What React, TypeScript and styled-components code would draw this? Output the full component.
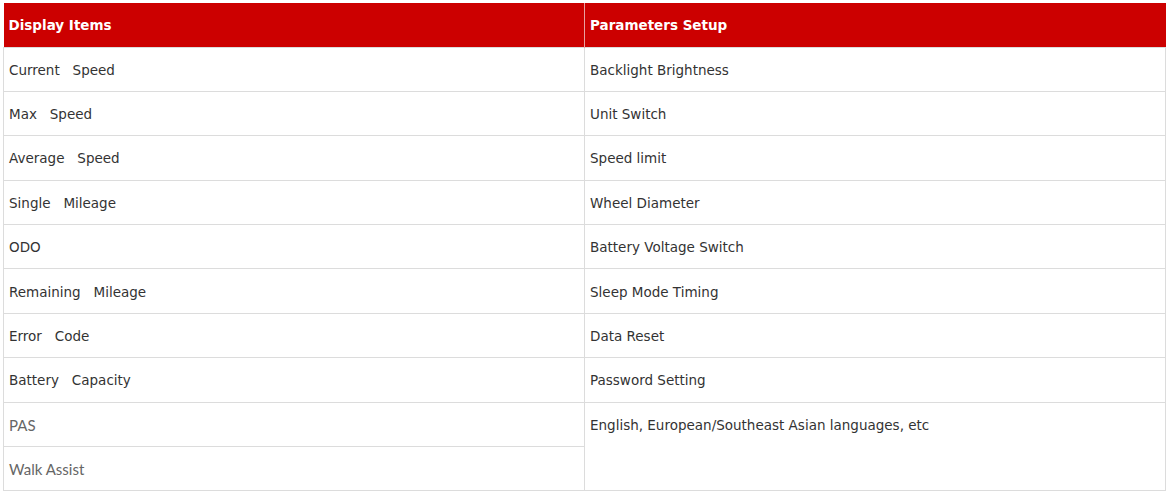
import React from "react";
import styled, { createGlobalStyle } from "styled-components";

const Global = createGlobalStyle`
  html, body { margin: 0; padding: 0; background: #fff; }
  body { padding: 3px; }
`;

const Table = styled.table`
  width: 1163px;
  border-collapse: collapse;
  table-layout: fixed;
  font-family: "DejaVu Sans", Verdana, sans-serif;
  font-size: 13.5px;
  color: #333;
`;

const HeadCell = styled.th`
  background: #cc0000;
  color: #fff;
  font-weight: bold;
  text-align: left;
  height: 44px;
  padding: 0 5px;
  box-sizing: border-box;
  border-left: 1px solid #e8a0a0;
  &:first-child { border-left: none; }
`;

const Cell = styled.td<{ $alt?: boolean; $top?: boolean }>`
  border: 1px solid #dcdcdc;
  height: 44.4px;
  padding: ${(p) => (p.$top ? "14px 5px 0" : "1px 5px 0")};
  vertical-align: ${(p) => (p.$top ? "top" : "middle")};
  box-sizing: border-box;
  ${(p) =>
    p.$alt
      ? `font-family: Lato, "Liberation Sans", sans-serif; font-size: 15px; color: #666;`
      : ""}
`;

const left = [
  "Current\u00a0\u00a0 Speed",
  "Max\u00a0\u00a0 Speed",
  "Average\u00a0\u00a0 Speed",
  "Single\u00a0\u00a0 Mileage",
  "ODO",
  "Remaining\u00a0\u00a0 Mileage",
  "Error\u00a0\u00a0 Code",
  "Battery\u00a0\u00a0 Capacity",
  "PAS",
  "Walk Assist",
];

const right = [
  "Backlight Brightness",
  "Unit Switch",
  "Speed limit",
  "Wheel Diameter",
  "Battery Voltage Switch",
  "Sleep Mode Timing",
  "Data Reset",
  "Password Setting",
  "English, European/Southeast Asian languages, etc",
];

export default function App() {
  return (
    <>
      <Global />
      <Table>
        <colgroup>
          <col style={{ width: 581 }} />
          <col />
        </colgroup>
        <thead>
          <tr>
            <HeadCell>Display Items</HeadCell>
            <HeadCell>Parameters Setup</HeadCell>
          </tr>
        </thead>
        <tbody>
          {left.map((l, i) => (
            <tr key={i}>
              <Cell $alt={i >= 8}>{l}</Cell>
              {i < 8 && <Cell>{right[i]}</Cell>}
              {i === 8 && (
                <Cell rowSpan={2} $top>
                  {right[8]}
                </Cell>
              )}
            </tr>
          ))}
        </tbody>
      </Table>
    </>
  );
}
